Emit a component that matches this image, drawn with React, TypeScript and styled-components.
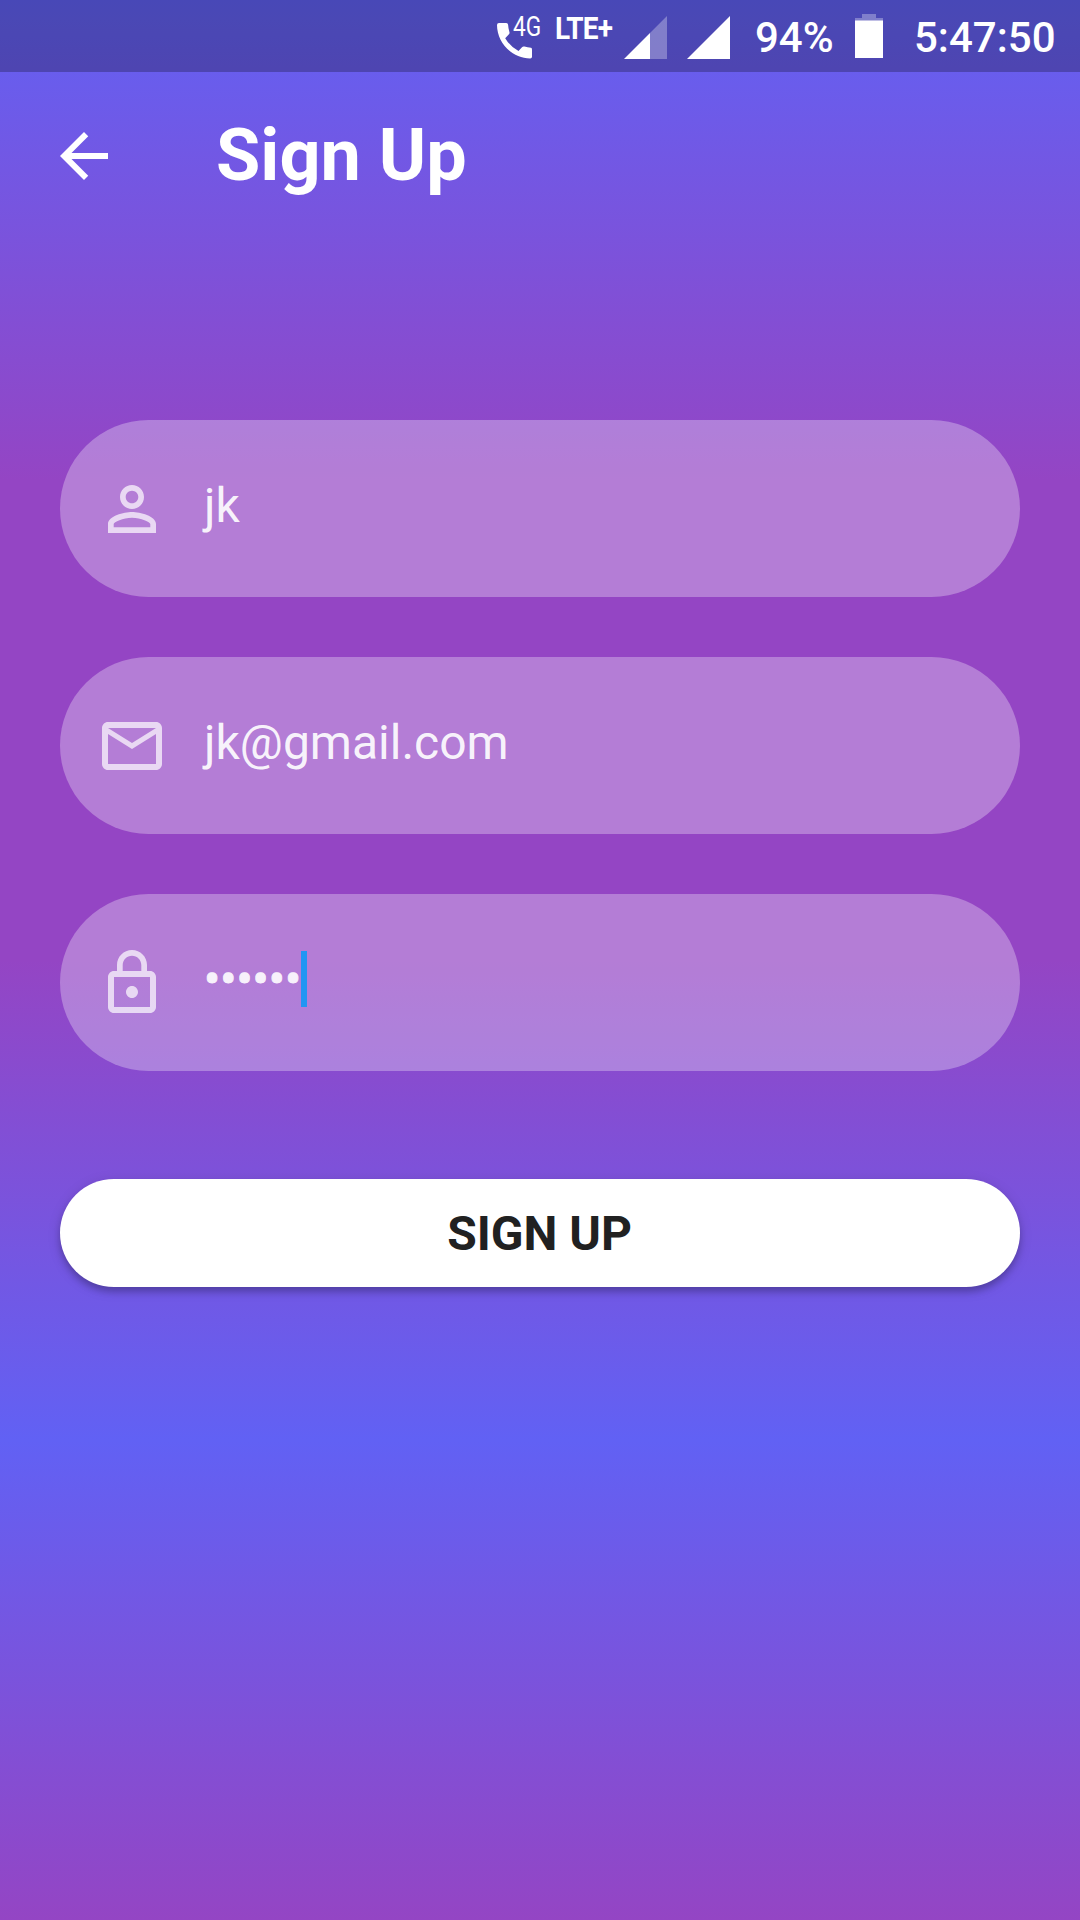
import React from "react";
import styled, { createGlobalStyle } from "styled-components";

const GlobalStyle = createGlobalStyle`
  * { box-sizing: border-box; }
  body { margin: 0; font-family: Roboto, "Liberation Sans", sans-serif; }
`;

const Screen = styled.div`
  width: 1080px;
  height: 1920px;
  display: flex;
  flex-direction: column;
  overflow: hidden;
  background: linear-gradient(180deg, #6161f4 0%, #9445c4 25%, #9445c4 50%, #6161f4 75%, #9445c4 100%);
`;

const StatusBar = styled.header`
  height: 72px;
  display: flex;
  justify-content: flex-end;
  align-items: flex-start;
  padding-right: 25px;
  background: rgba(0, 0, 0, 0.25);
  color: #fff;
`;

const CallStatus = styled.div`
  display: flex;
  width: 58px;
  padding-top: 14px;
  flex: none;
`;

const StatusIcon = styled.svg<{ $gap?: number; $top?: number }>`
  display: block;
  flex: none;
  margin-top: ${(p) => p.$top ?? 0}px;
  margin-right: ${(p) => p.$gap ?? 0}px;
`;

const NetworkLabel = styled.span<{ $size: number; $weight: number; $top: number; $width: number; $squeeze: number; $tracking?: number }>`
  width: ${(p) => p.$width}px;
  margin-top: ${(p) => p.$top}px;
  font-size: ${(p) => p.$size}px;
  line-height: 32px;
  font-weight: ${(p) => p.$weight};
  letter-spacing: ${(p) => p.$tracking ?? 0}px;
  white-space: nowrap;
  transform: scaleX(${(p) => p.$squeeze});
  transform-origin: left;
  flex: none;
`;

const StatusText = styled.span<{ $width: number; $gap: number }>`
  width: ${(p) => p.$width}px;
  margin-right: ${(p) => p.$gap}px;
  padding-top: 13px;
  font-size: 42px;
  line-height: 50px;
  font-weight: 500;
  white-space: nowrap;
  flex: none;
`;

const TitleBar = styled.div`
  height: 168px;
  display: flex;
  align-items: center;
  padding: 0 48px;
`;

const BackButton = styled.button`
  width: 72px;
  height: 72px;
  padding: 0;
  border: 0;
  background: none;
  color: #fff;
`;

const Glyph = styled.svg`
  display: block;
  width: 72px;
  height: 72px;
  fill: currentColor;
  flex: none;
`;

const Title = styled.h1`
  margin: 0 0 0 96px;
  color: #fff;
  font-size: 72px;
  line-height: 84px;
  font-weight: 700;
`;

const Form = styled.form`
  display: flex;
  flex-direction: column;
  gap: 60px;
  padding: 180px 60px 0;
`;

const Field = styled.label`
  height: 177px;
  display: flex;
  align-items: center;
  padding-left: 36px;
  border-radius: 90px;
  background: rgba(255, 255, 255, 0.3);
  color: rgba(255, 255, 255, 0.7);
`;

const FieldValue = styled.span<{ $masked?: boolean }>`
  margin: 0 0 6px 36px;
  font-size: 48px;
  line-height: 56px;
  color: ${(p) => (p.$masked ? "#f7f1fb" : "rgba(255, 255, 255, 0.92)")};
  -webkit-text-stroke: ${(p) => (p.$masked ? "1px #f7f1fb" : "0")};
`;

const Caret = styled.span`
  width: 6px;
  height: 56px;
  margin-bottom: 7px;
  background: #2196f3;
`;

const SubmitButton = styled.button`
  height: 108px;
  margin-top: 48px;
  padding: 2px 1px 0 0;
  border: 0;
  border-radius: 54px;
  background: #fff;
  color: #212121;
  font-family: inherit;
  font-size: 48px;
  line-height: 56px;
  font-weight: 700;
  box-shadow: 0 5px 6px rgba(0, 0, 0, 0.2), 0 3px 14px rgba(0, 0, 0, 0.12);
`;

const icons = {
  back: "M20 11H7.83l5.59-5.59L12 4l-8 8 8 8 1.41-1.41L7.83 13H20v-2z",
  person:
    "M12 5.9c1.16 0 2.1.94 2.1 2.1s-.94 2.1-2.1 2.1S9.9 9.16 9.9 8s.94-2.1 2.1-2.1m0 9c2.97 0 6.1 1.46 6.1 2.1v1.1H5.9V17c0-.64 3.13-2.1 6.1-2.1M12 4C9.79 4 8 5.79 8 8s1.79 4 4 4 4-1.79 4-4-1.79-4-4-4zm0 9c-2.67 0-8 1.34-8 4v3h16v-3c0-2.66-5.33-4-8-4z",
  mail: "M20 4H4c-1.1 0-2 .9-2 2v12c0 1.1.9 2 2 2h16c1.1 0 2-.9 2-2V6c0-1.1-.9-2-2-2zm0 14H4V8l8 5 8-5v10zm-8-7L4 6h16l-8 5z",
  lock: "M12 17c1.1 0 2-.9 2-2s-.9-2-2-2-2 .9-2 2 .9 2 2 2zm6-9h-1V6c0-2.76-2.24-5-5-5S7 3.24 7 6v2H6c-1.1 0-2 .9-2 2v10c0 1.1.9 2 2 2h12c1.1 0 2-.9 2-2V10c0-1.1-.9-2-2-2zM8.9 6c0-1.71 1.39-3.1 3.1-3.1s3.1 1.39 3.1 3.1v2H8.9V6zM18 20H6V10h12v10z",
};

const Icon = ({ name }: { name: keyof typeof icons }) => (
  <Glyph viewBox="0 0 24 24" aria-hidden="true">
    <path d={icons[name]} />
  </Glyph>
);

export default function App() {
  return (
    <>
      <GlobalStyle />
      <Screen>
        <StatusBar>
          <CallStatus>
            <StatusIcon width="36" height="45" viewBox="0 0 36 45" fill="#fff" $gap={-20}>
              <path d="M2 9h7.200q1.800 0 1.900 1.800 .2 3.800 1.300 7.200 .5 1.500-.7 2.600l-3.500 3.600q5 8.500 13.300 12.800l3.500-3.800q1-1 2.500-.6 3 1 6.500 1.100 1 .1 1 2v7q0 1.800-1.800 1.800C15.500 44.500 0 29 0 11q0-2 2-2z" />
            </StatusIcon>
            <NetworkLabel $size={28} $weight={400} $top={-3} $width={29} $squeeze={0.81}>4G</NetworkLabel>
          </CallStatus>
          <NetworkLabel $size={31} $weight={700} $top={13} $width={69} $squeeze={0.9} $tracking={-0.8}>LTE+</NetworkLabel>
          <StatusIcon width="43" height="43" viewBox="0 0 43 43" $gap={20} $top={16}>
            <path d="M26 17L43 0v43H26z" fill="#fff" fillOpacity=".3" />
            <path d="M0 43L26 17v26z" fill="#fff" />
          </StatusIcon>
          <StatusIcon width="43" height="43" viewBox="0 0 43 43" $gap={25} $top={16}>
            <path d="M0 43L43 0v43z" fill="#fff" />
          </StatusIcon>
          <StatusText $width={78} $gap={22}>94%</StatusText>
          <StatusIcon width="28" height="44" viewBox="0 0 28 44" $gap={31} $top={14}>
            <path d="M7 0h14v4h7v3H0V4h7z" fill="#fff" fillOpacity=".3" />
            <path d="M0 6.500h28V44H0z" fill="#fff" />
          </StatusIcon>
          <StatusText $width={141} $gap={0}>5:47:50</StatusText>
        </StatusBar>
        <TitleBar>
          <BackButton type="button" aria-label="Back">
            <Icon name="back" />
          </BackButton>
          <Title>Sign Up</Title>
        </TitleBar>
        <Form>
          <Field>
            <Icon name="person" />
            <FieldValue>jk</FieldValue>
          </Field>
          <Field>
            <Icon name="mail" />
            <FieldValue>jk@gmail.com</FieldValue>
          </Field>
          <Field>
            <Icon name="lock" />
            <FieldValue $masked>••••••</FieldValue>
            <Caret />
          </Field>
          <SubmitButton type="button">SIGN UP</SubmitButton>
        </Form>
      </Screen>
    </>
  );
}
